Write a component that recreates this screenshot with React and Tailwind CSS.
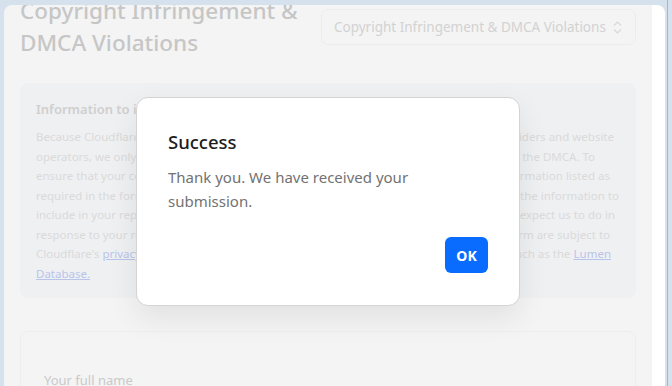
export default function App() {
  const lines = [
    ['Because Cloudflare is not able to remove content from hosting ', 'providers and website', 'pr-[6px]'],
    ['operators, we only process complaints that meet the requirements ', 'of the DMCA. To', 'pr-[25px]'],
    ['ensure that your complaint is processed quickly, include all the ', 'information listed as', 'pr-[10px]'],
    ['required in the form below. Please refer to our guidelines ', 'on the information to', 'pr-[1px]'],
    ['include in your report and for more details on what you ', 'can expect us to do in', 'pr-[5px]'],
    ['response to your report. Please note that submissions to ', 'this form are subject to', 'pr-[10px]'],
  ];

  return (
    <div
      className="relative h-[386px] w-[672px] overflow-hidden bg-[#d5e1ec]"
      style={{ fontFamily: '"Noto Sans", "Open Sans", sans-serif' }}
    >
      {/* window */}
      <div className="ml-[4px] mt-[5px] flex h-[381px] w-[661px] overflow-hidden rounded-t-[8px]">
        <div className="w-[648px] bg-[#f4f4f4] pl-[16px] pr-[16px]">
          <div className="flex items-start justify-between">
            <h1 className="-mt-[10px] w-[295px] text-[22.5px] font-medium leading-[32px] text-[#c6c6c6]">
              Copyright Infringement &amp; DMCA Violations
            </h1>
            <div className="mt-[4px] flex h-[36px] w-[315px] items-center justify-between rounded-[7px] border border-[#ececec] pl-[12px] pr-[13px] text-[13.5px] text-[#d2d2d2]">
              <span className="whitespace-nowrap">Copyright Infringement &amp; DMCA Violations</span>
              <svg width="9" height="15" viewBox="0 0 9 15" fill="none" stroke="#d8d8d8" strokeWidth="1.2">
                <path d="M1 5.5 L4.5 2 L8 5.5" />
                <path d="M1 9.5 L4.5 13 L8 9.5" />
              </svg>
            </div>
          </div>

          <div className="mt-[24px] h-[215px] w-[616px] rounded-[8px] bg-[#eff0f2] px-[16px] pt-[16px]">
            <h2 className="text-[13px] font-semibold leading-[20px] text-[#cfcfcf]">
              Information to include
            </h2>
            <div className="mt-[8px] text-[11.5px] leading-[19.5px] text-[#dadada]">
              {lines.map(([a, b, pr]) => (
                <div key={b} className={`flex whitespace-nowrap ${pr}`}>
                  <span className="min-w-0 flex-1 overflow-hidden">{a}</span>
                  <span className="shrink-0">{b}</span>
                </div>
              ))}
              <div className="flex whitespace-nowrap pr-[9px]">
                <span className="min-w-0 flex-1 overflow-hidden">
                  Cloudflare's <span className="text-[#b9c4ea] underline">privacy policy</span> and may be shared with third{' '}
                </span>
                <span className="shrink-0">
                  parties such as the <span className="text-[#b9c4ea] underline">Lumen</span>
                </span>
              </div>
              <div>
                <span className="text-[#b9c4ea] underline">Database.</span>
              </div>
            </div>
          </div>

          <div className="mt-[33px] h-[80px] w-[616px] rounded-[8px] border border-[#ededed] bg-[#f4f4f4] px-[23px] pt-[39px]">
            <div className="text-[13px] text-[#c9c9c9]">Your full name</div>
          </div>
        </div>
        <div className="w-[13px] bg-white" />
      </div>
      <div className="absolute right-[4px] top-0 h-full w-px bg-[#a9b6c2]" />

      {/* modal */}
      <div className="absolute left-[136px] top-[97px] w-[384px] rounded-[12px] border border-[#d4d4d4] bg-white px-[31px] pb-[32px] pt-[31px] shadow-[0_12px_30px_rgba(0,0,0,0.08)]">
        <h3 className="text-[18.5px] font-medium leading-[26px] text-[#1c1c1c]">Success</h3>
        <p className="mt-[10px] w-[260px] text-[15px] leading-[24px] text-[#727272]">
          Thank you. We have received your submission.
        </p>
        <div className="mt-[24px] flex justify-end">
          <button className="h-[36px] w-[43px] rounded-[6px] bg-[#0a6cff] text-[14px] font-bold text-white">
            OK
          </button>
        </div>
      </div>
    </div>
  );
}
